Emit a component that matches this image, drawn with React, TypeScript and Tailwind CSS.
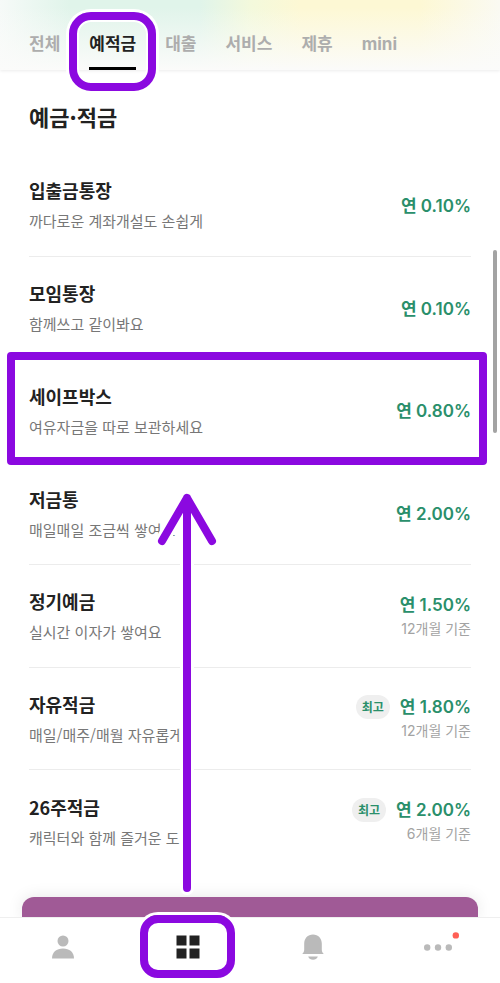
type Product = {
  name: string;
  desc: string;
  rate: string;
  term?: string;
  best?: boolean;
  highlighted?: boolean;
};

const TABS = ["전체", "예적금", "대출", "서비스", "제휴", "mini"];

const PRODUCTS: Product[] = [
  { name: "입출금통장", desc: "까다로운 계좌개설도 손쉽게", rate: "0.10%" },
  { name: "모임통장", desc: "함께쓰고 같이봐요", rate: "0.10%" },
  { name: "세이프박스", desc: "여유자금을 따로 보관하세요", rate: "0.80%", highlighted: true },
  { name: "저금통", desc: "매일매일 조금씩 쌓여요", rate: "2.00%" },
  { name: "정기예금", desc: "실시간 이자가 쌓여요", rate: "1.50%", term: "12개월 기준" },
  { name: "자유적금", desc: "매일/매주/매월 자유롭게", rate: "1.80%", term: "12개월 기준", best: true },
  { name: "26주적금", desc: "캐릭터와 함께 즐거운 도전", rate: "2.00%", term: "6개월 기준", best: true },
];

function TabBar({ active }: { active: string }) {
  return (
    <header className="relative z-10 bg-[#fafafa] bg-[linear-gradient(to_bottom,transparent_10%,#fbfbfa),linear-gradient(to_right,#f6faf8,#e0f4ea_14%,#e0f4ea_40%,#f3f9dc_50%,#fdf8d4_60%,#fdf8d4_84%,#fafaf2)] shadow-[0_1px_3px_rgba(0,0,0,0.08)]">
      <nav className="flex gap-[29px] px-[29px] pt-5 font-['Inter','Noto_Sans_CJK_KR',sans-serif]">
        {TABS.map((tab) => (
          <button
            key={tab}
            type="button"
            className={`relative h-[50px] border-b-3 text-[17px] leading-6 font-bold whitespace-nowrap ${
              tab === active ? "border-black text-[#222]" : "border-transparent text-[#adadad]"
            }`}
          >
            {tab}
            {tab === active && (
              <span className="pointer-events-none absolute -inset-x-5 -top-2 -bottom-6 rounded-[22px] border-8 border-[#8b09e0] shadow-[0_0_0_3px_#fff,inset_0_0_0_2px_#fff]" />
            )}
          </button>
        ))}
      </nav>
    </header>
  );
}

function ProductRow({ product }: { product: Product }) {
  const { name, desc, rate, term, best, highlighted } = product;
  return (
    <li className="relative flex flex-1 items-center justify-between border-b border-[#ececec] pt-[2px] last:border-transparent">
      <div className="flex flex-col gap-[7px]">
        <h2 className="text-[18px] leading-6 font-bold text-[#222]">{name}</h2>
        <p className="text-[15px] leading-6 text-[#777]">{desc}</p>
      </div>
      <div className="flex flex-col items-end">
        <div className="flex items-center gap-[10px]">
          {best && (
            <span className="rounded-full bg-[#efefef] px-[6px] text-[12px] leading-6 font-bold text-[#2a8f6b]">
              최고
            </span>
          )}
          <strong className="font-['Inter','Noto_Sans_CJK_KR',sans-serif] text-[17px] leading-6 font-semibold text-[#2a8f6b]">
            연 {rate}
          </strong>
        </div>
        {term && (
          <span className="font-['Inter','Noto_Sans_CJK_KR',sans-serif] text-[14px] leading-6 text-[#a3a3a3]">
            {term}
          </span>
        )}
      </div>
      {highlighted && (
        <span className="pointer-events-none absolute -top-[7px] -right-4 -bottom-1 -left-[22px] z-10 rounded-[4px] border-8 border-[#8b09e0] shadow-[0_0_0_2px_#fff,inset_0_0_0_2px_#fff]" />
      )}
    </li>
  );
}

/** Arrow that leads from the bottom menu up to the highlighted product. */
function GuideArrow() {
  const d = "M32 398V8M7 51L32 8L57 51";
  return (
    <svg
      viewBox="0 0 64 408"
      className="pointer-events-none absolute top-[336px] left-[126px] w-16"
      fill="none"
      strokeLinecap="round"
      strokeLinejoin="round"
      aria-hidden
    >
      <path d={d} stroke="#fff" strokeWidth="14" />
      <path d={d} stroke="#8b09e0" strokeWidth="8" />
    </svg>
  );
}

function BottomNav() {
  const item = "relative flex h-[65px] flex-1 items-center justify-center";
  return (
    <nav className="relative z-10 flex border-t border-[#efefef] bg-white">
      <button type="button" aria-label="내 계좌" className={item}>
        <svg width="24" height="24" viewBox="0 0 24 24" fill="#bababa" className="mb-2">
          <circle cx="12" cy="6" r="5.5" />
          <path d="M1 23.5C1 17 5.5 13.5 12 13.5S23 17 23 23.5Z" />
        </svg>
      </button>
      <button type="button" aria-label="상품" className={item}>
        <svg width="24" height="24" viewBox="0 0 24 24" fill="#222" className="mb-2">
          <path d="M0.5 0.5h10v10h-10zM13.5 0.5h10v10h-10zM0.5 13.5h10v10h-10zM13.5 13.5h10v10h-10z" />
        </svg>
        <span className="pointer-events-none absolute inset-x-[15px] -top-[3px] bottom-[5px] rounded-[18px] border-8 border-[#8b09e0] shadow-[0_0_0_3px_#fff,inset_0_0_0_1px_#fff]" />
      </button>
      <button type="button" aria-label="알림" className={item}>
        <svg width="24" height="26" viewBox="0 0 24 26" fill="#bababa" className="mb-2">
          <path d="M12 0.5C6.8 0.5 3.2 4.4 3.2 9.5V15.5C3.2 17.4 2.6 18.5 1.2 20H22.8C21.4 18.5 20.8 17.4 20.8 15.5V9.5C20.8 4.4 17.2 0.5 12 0.5Z" />
          <path d="M7.2 22.4H16.8C16 24.6 14.3 25.7 12 25.7S8 24.6 7.2 22.4Z" />
        </svg>
      </button>
      <button type="button" aria-label="더보기" className={item}>
        <svg width="44" height="30" viewBox="0 0 44 30" className="mb-2">
          <g fill="#bababa">
            <circle cx="11.2" cy="15.5" r="3.2" />
            <circle cx="22" cy="15.5" r="3.2" />
            <circle cx="32.8" cy="15.5" r="3.2" />
          </g>
          <circle cx="39.8" cy="3.4" r="3.2" fill="#ff5f55" />
        </svg>
      </button>
    </nav>
  );
}

export default function App() {
  return (
    <div
      lang="ko"
      className="relative flex min-h-screen flex-col overflow-hidden bg-white font-['Noto_Sans_CJK_KR',sans-serif]"
    >
      <TabBar active="예적금" />
      <main className="flex flex-1 flex-col">
        <h1 className="px-[29px] pt-[30px] pb-[22px] text-[22px] leading-8 font-bold text-[#222]">예금·적금</h1>
        <div className="relative mx-[29px] flex flex-1 flex-col">
          <ul className="flex flex-1 flex-col">
            {PRODUCTS.map((p) => (
              <ProductRow key={p.name} product={p} />
            ))}
          </ul>
          <GuideArrow />
        </div>
        <div className="mx-[22px] mt-6 h-5 rounded-t-xl bg-[#a05a96] shadow-[0_0_16px_rgba(0,0,0,0.1)]" />
      </main>
      <BottomNav />
      <span className="absolute top-[250px] right-[3px] h-[183px] w-1 rounded-full bg-[#a3a3a3]" />
    </div>
  );
}
